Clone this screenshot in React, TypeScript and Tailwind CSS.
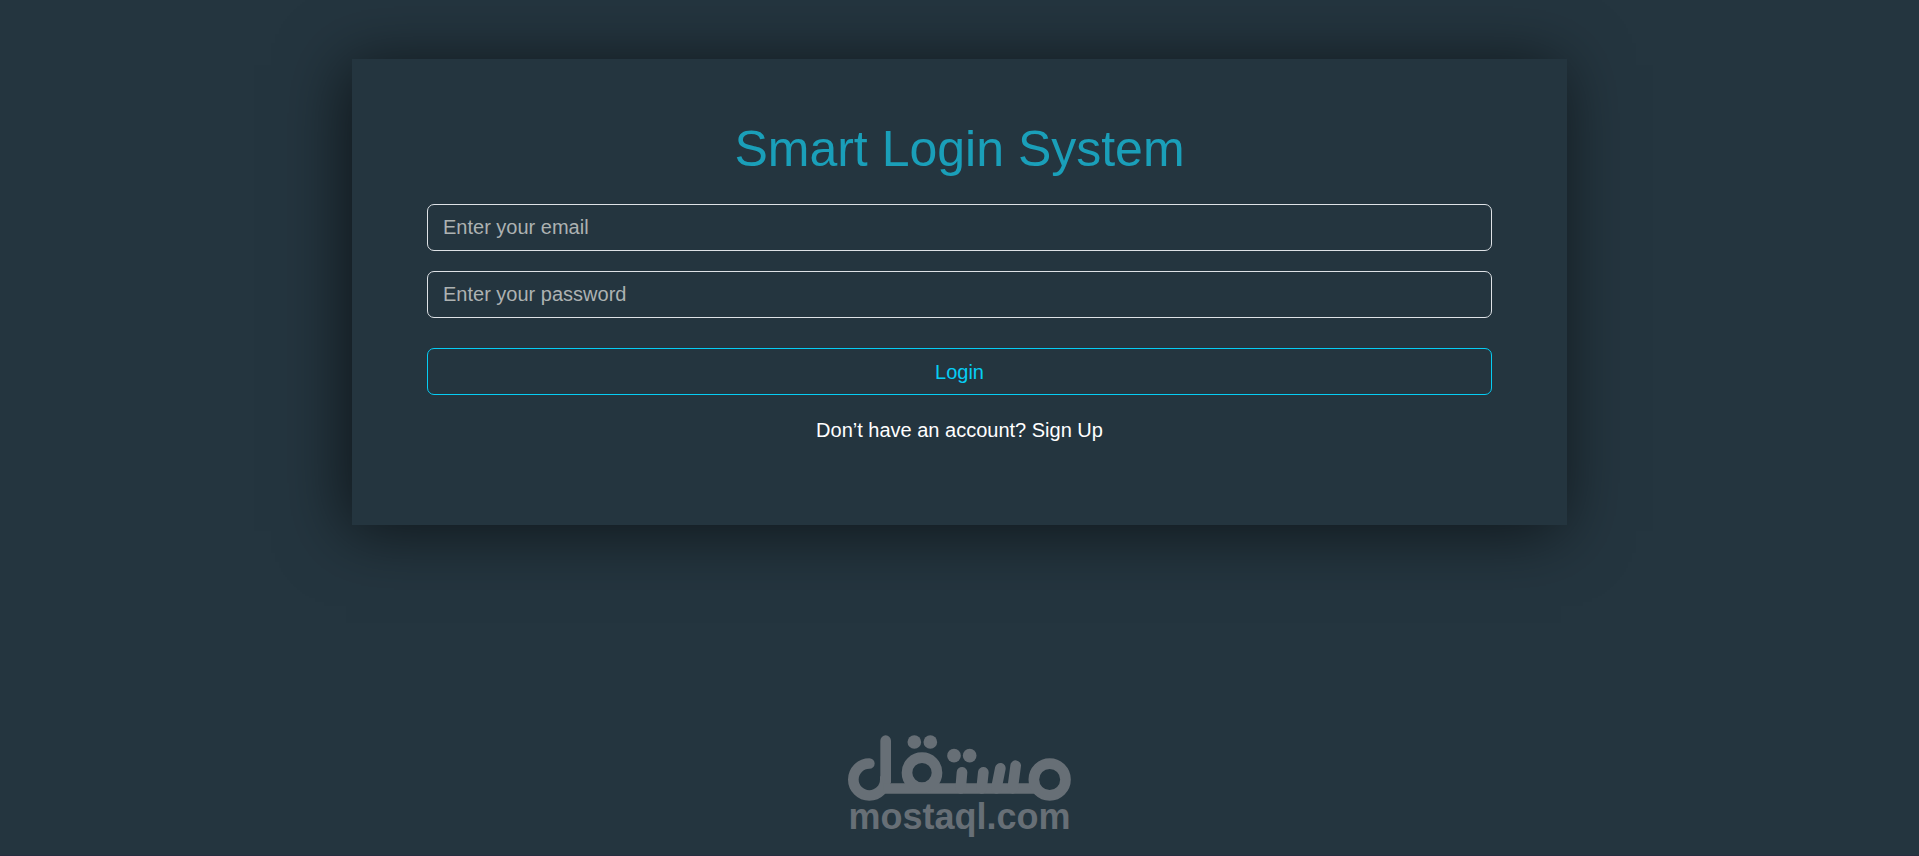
import { useState, type FormEvent, type InputHTMLAttributes } from "react";

interface FieldProps extends InputHTMLAttributes<HTMLInputElement> {
  id: string;
  label: string;
}

function Field({ id, label, ...props }: FieldProps) {
  return (
    <input
      id={id}
      aria-label={label}
      placeholder={label}
      className="block h-[47px] w-full rounded-[7px] border border-[#dee2e6] bg-transparent px-[15px] text-white outline-none placeholder:text-[#adb2b2] focus:border-[#06cdf4]"
      {...props}
    />
  );
}

function MostaqlLogo() {
  return (
    <div className="flex flex-col items-center text-[#676f76]">
      <svg
        viewBox="0 0 669 198"
        className="h-[66px] w-[223px]"
        fill="none"
        stroke="currentColor"
        strokeWidth="32"
        strokeLinecap="round"
        aria-hidden="true"
      >
        {/* lam */}
        <path d="M64 85.5A48 48 0 1 0 112 133.5L113 133V17" />
        {/* baseline */}
        <path d="M106 160.5H561" strokeLinecap="butt" />
        {/* qaf */}
        <circle cx="222" cy="113" r="45" />
        {/* ta and seen */}
        <path d="M342 112L338 160M406 112L401 160M457 100L445 160M503 92L494 160" />
        {/* meem */}
        <circle cx="605" cy="133.5" r="47.5" />
        <g fill="currentColor" stroke="none">
          <circle cx="199" cy="21" r="20.5" />
          <circle cx="247" cy="21" r="20.5" />
          <circle cx="318" cy="62" r="20.5" />
          <circle cx="365" cy="62" r="20.5" />
        </g>
      </svg>
      <span className="text-[36px] leading-8 font-bold">mostaql.com</span>
    </div>
  );
}

export default function App() {
  const [email, setEmail] = useState("");
  const [password, setPassword] = useState("");

  const handleSubmit = (e: FormEvent) => {
    e.preventDefault();
  };

  return (
    <div className="flex min-h-screen flex-col items-center justify-between border-b border-[#262d40] bg-[#24353f] pt-[59px] pb-[22px] font-['Liberation_Sans',Arial,sans-serif] text-[20px] leading-[30px]">
      <main className="w-full max-w-[1215px] bg-[#24353f] px-[75px] pt-[60px] pb-20 text-center shadow-[-6px_6px_62px_rgba(0,0,0,0.6)]">
        <h1 className="text-[50px] leading-[60px] text-[#1a9fb9]">
          Smart Login System
        </h1>
        <form onSubmit={handleSubmit} className="mt-[25px]">
          <div className="space-y-5">
            <Field
              id="email"
              label="Enter your email"
              type="email"
              value={email}
              onChange={(e) => setEmail(e.target.value)}
            />
            <Field
              id="password"
              label="Enter your password"
              type="password"
              value={password}
              onChange={(e) => setPassword(e.target.value)}
            />
          </div>
          <button
            type="submit"
            className="mt-[30px] block h-[47px] w-full cursor-pointer rounded-[7px] border border-[#06cdf4] text-[#06cdf4]"
          >
            Login
          </button>
        </form>
        <p className="mt-5 text-white">
          Don’t have an account?{" "}
          <a href="#signup" className="hover:underline">
            Sign Up
          </a>
        </p>
      </main>
      <MostaqlLogo />
    </div>
  );
}
